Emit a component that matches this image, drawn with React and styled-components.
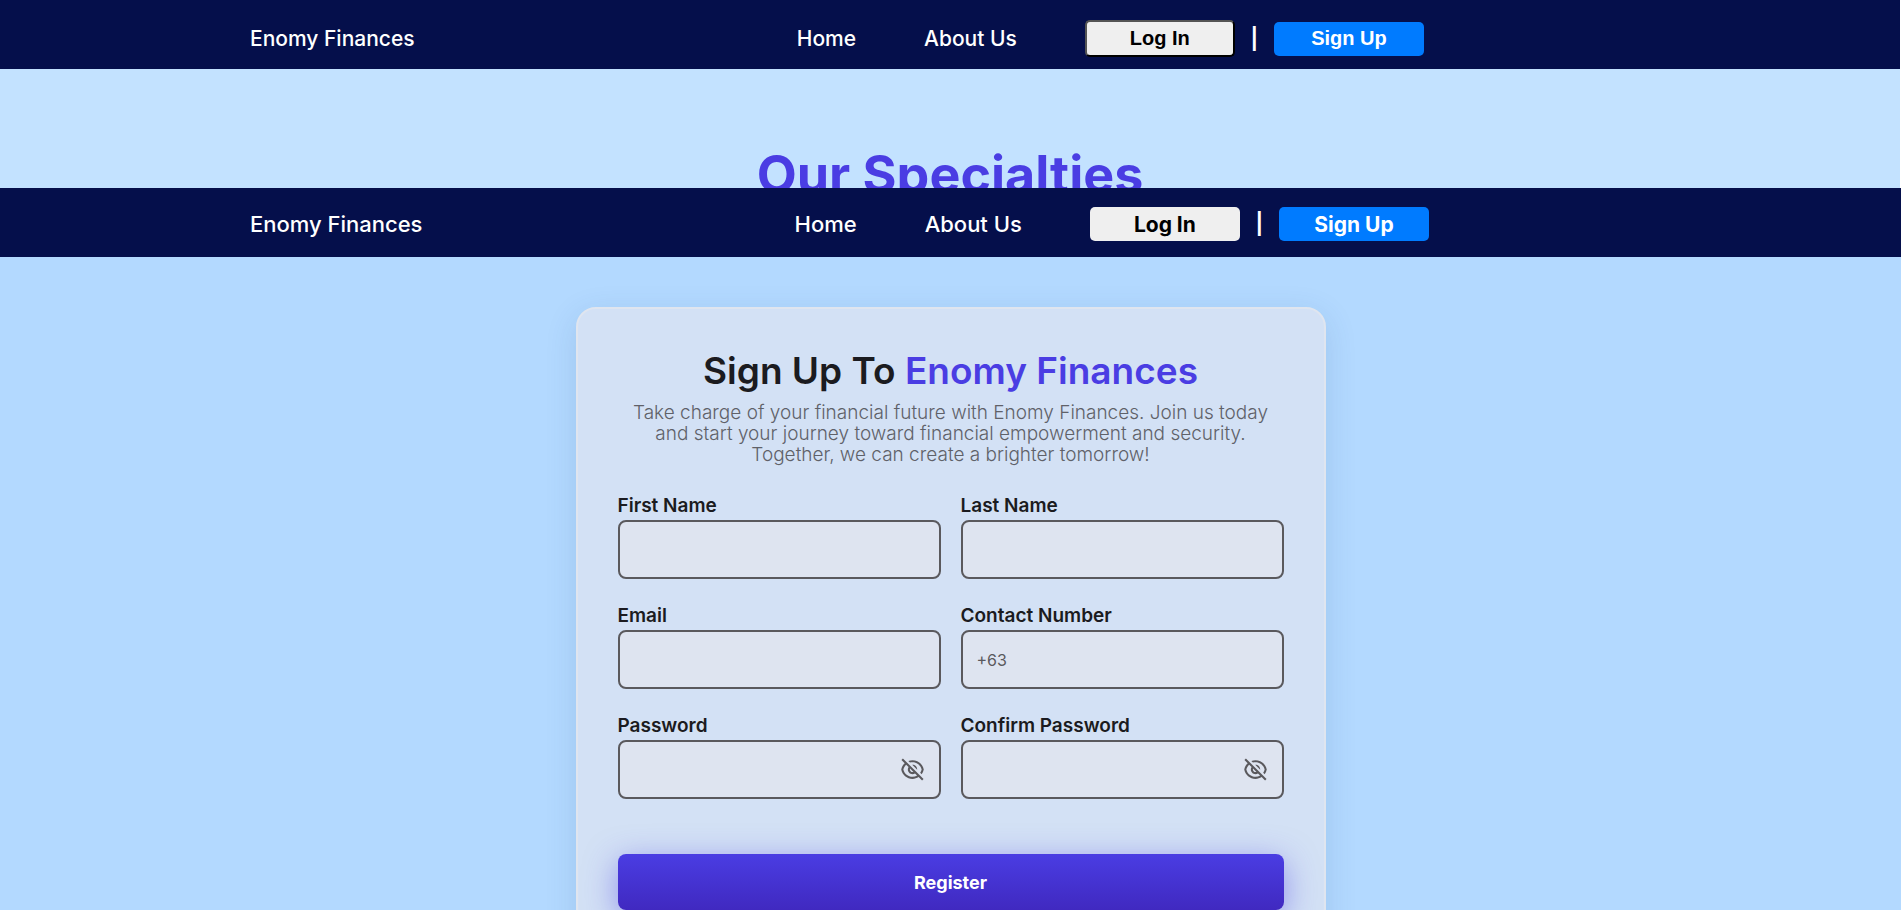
import React, { useState } from "react";
import styled, { createGlobalStyle } from "styled-components";
import { RiEyeOffLine, RiEyeLine } from "react-icons/ri";

const GlobalStyle = createGlobalStyle`
  *, *::before, *::after { box-sizing: border-box; }
  body { margin: 0; background: #ffffff; font-family: Inter, "Open Sans", sans-serif; }
  h1, h2, p { margin: 0; }
`;

const Page = styled.div`
  height: 100vh;
  overflow: hidden;
  display: flex;
  flex-direction: column;
`;

const Intro = styled.section`
  flex: none;
  height: 188px;
  margin-right: 4px;
  overflow: hidden;
  background: #c3e2ff;
`;

const SignUpView = styled.section`
  flex: 1 0 auto;
  margin-right: 3px;
  background: #b3d9ff;
`;

const Nav = styled.nav`
  height: 69px;
  padding: ${(p) => (p.$plain ? "8px" : "3px")} 0 0 250px;
  display: flex;
  align-items: center;
  background: #050f4b;
  color: #ffffff;
`;

const NavInner = styled.div`
  flex: 0 1 ${(p) => (p.$plain ? "1174px" : "1179px")};
  display: flex;
  align-items: center;
  justify-content: space-between;
`;

const Brand = styled.a`
  color: inherit;
  text-decoration: none;
  font-size: ${(p) => (p.$plain ? "21px" : "22px")};
  font-weight: 500;
  line-height: 30px;
`;

const NavLinks = styled.div`
  display: flex;
  align-items: center;
  gap: 68px;
`;

const NavLink = styled(Brand)``;

const AuthButtons = styled.div`
  display: flex;
  align-items: center;
  gap: 15px;
`;

const Divider = styled.span`
  padding-bottom: 4px;
  font: 700 25px/30px "DejaVu Sans", sans-serif;
`;

const AuthButton = styled.button`
  width: 150px;
  height: 34px;
  padding: 0;
  border: 0;
  border-radius: 5px;
  background: ${(p) => (p.$primary ? "#007bff" : "#efefef")};
  color: ${(p) => (p.$primary ? "#ffffff" : "#000000")};
  font-family: ${(p) => (p.$plain ? '"Liberation Sans", sans-serif' : "inherit")};
  font-size: ${(p) => (p.$plain ? "20px" : "21px")};
  font-weight: 700;
  cursor: pointer;
`;

const OutsetButton = styled(AuthButton)`
  height: 37px;
  border: 2px outset #000000;
`;

const Specialties = styled.h2`
  padding-top: 76px;
  color: #4a3de3;
  font-size: 52px;
  line-height: 60px;
  font-weight: 700;
  text-align: center;
`;

const Card = styled.form`
  width: 750px;
  max-width: 100%;
  margin: 50px auto;
  padding: 40px;
  border: 2px solid #dfe5ef;
  border-radius: 20px;
  background: #d3e1f5;
  box-shadow: 0 8px 32px rgba(31, 80, 135, 0.14);
`;

const Title = styled.h1`
  color: #1b1b20;
  font-size: 37px;
  line-height: 43px;
  font-weight: 600;
  text-align: center;
`;

const Accent = styled.span`
  color: #4a3de3;
`;

const Lead = styled.p`
  margin-top: 10px;
  color: #5f6169;
  font-size: 19px;
  line-height: 21px;
  font-weight: 300;
  text-align: center;
`;

const Fields = styled.div`
  display: grid;
  grid-template-columns: 1fr 1fr;
  gap: 26px 20px;
  margin-top: 30px;
`;

const Field = styled.div`
  display: flex;
  flex-direction: column;
  gap: 4px;
`;

const Label = styled.label`
  color: #1b1b20;
  font-size: 19px;
  line-height: 21px;
  font-weight: 600;
`;

const InputBox = styled.div`
  height: 59px;
  display: flex;
  align-items: center;
  padding: 0 14px;
  border: 2px solid #5a595d;
  border-radius: 8px;
  background: #dee4f0;
`;

const Input = styled.input`
  flex: 1;
  min-width: 0;
  padding: 0;
  border: 0;
  outline: 0;
  background: transparent;
  color: #1b1b20;
  font: 400 16px/20px Inter, sans-serif;
  &::placeholder { color: #5a595d; opacity: 1; }
`;

const EyeButton = styled.button`
  display: flex;
  padding: 0;
  border: 0;
  background: none;
  color: #5a595d;
  cursor: pointer;
`;

const Register = styled.button`
  display: block;
  width: 100%;
  height: 56px;
  margin-top: 55px;
  border: 0;
  border-radius: 8px;
  background: linear-gradient(#4a3de3, #4029c0);
  box-shadow: 0 8px 32px rgba(74, 61, 227, 0.5);
  color: #ffffff;
  font: 700 18px/21px Inter, sans-serif;
  cursor: pointer;
`;

function TopNav({ plain }) {
  const LogIn = plain ? OutsetButton : AuthButton;
  return (
    <Nav $plain={plain}>
      <NavInner $plain={plain}>
        <Brand href="#" $plain={plain}>Enomy Finances</Brand>
        <NavLinks>
          <NavLink href="#" $plain={plain}>Home</NavLink>
          <NavLink href="#" $plain={plain}>About Us</NavLink>
          <AuthButtons>
            <LogIn type="button" $plain={plain}>Log In</LogIn>
            <Divider>|</Divider>
            <AuthButton type="button" $plain={plain} $primary>Sign Up</AuthButton>
          </AuthButtons>
        </NavLinks>
      </NavInner>
    </Nav>
  );
}

function TextField({ id, label, type = "text", placeholder }) {
  const [shown, setShown] = useState(false);
  const secret = type === "password";
  return (
    <Field>
      <Label htmlFor={id}>{label}</Label>
      <InputBox>
        <Input id={id} type={secret && shown ? "text" : type} placeholder={placeholder} />
        {secret && (
          <EyeButton type="button" aria-label="Toggle password visibility" onClick={() => setShown(!shown)}>
            {shown ? <RiEyeLine size={25} /> : <RiEyeOffLine size={25} />}
          </EyeButton>
        )}
      </InputBox>
    </Field>
  );
}

export default function App() {
  return (
    <Page>
      <GlobalStyle />
      <Intro>
        <TopNav plain />
        <Specialties>Our Specialties</Specialties>
      </Intro>
      <SignUpView>
        <TopNav />
        <Card onSubmit={(e) => e.preventDefault()}>
          <Title>Sign Up To <Accent>Enomy Finances</Accent></Title>
          <Lead>
            Take charge of your financial future with Enomy Finances. Join us today and start your
            journey toward financial empowerment and security. Together, we can create a brighter
            tomorrow!
          </Lead>
          <Fields>
            <TextField id="first-name" label="First Name" />
            <TextField id="last-name" label="Last Name" />
            <TextField id="email" label="Email" type="email" />
            <TextField id="contact" label="Contact Number" type="tel" placeholder="+63" />
            <TextField id="password" label="Password" type="password" />
            <TextField id="confirm" label="Confirm Password" type="password" />
          </Fields>
          <Register type="submit">Register</Register>
        </Card>
      </SignUpView>
    </Page>
  );
}
